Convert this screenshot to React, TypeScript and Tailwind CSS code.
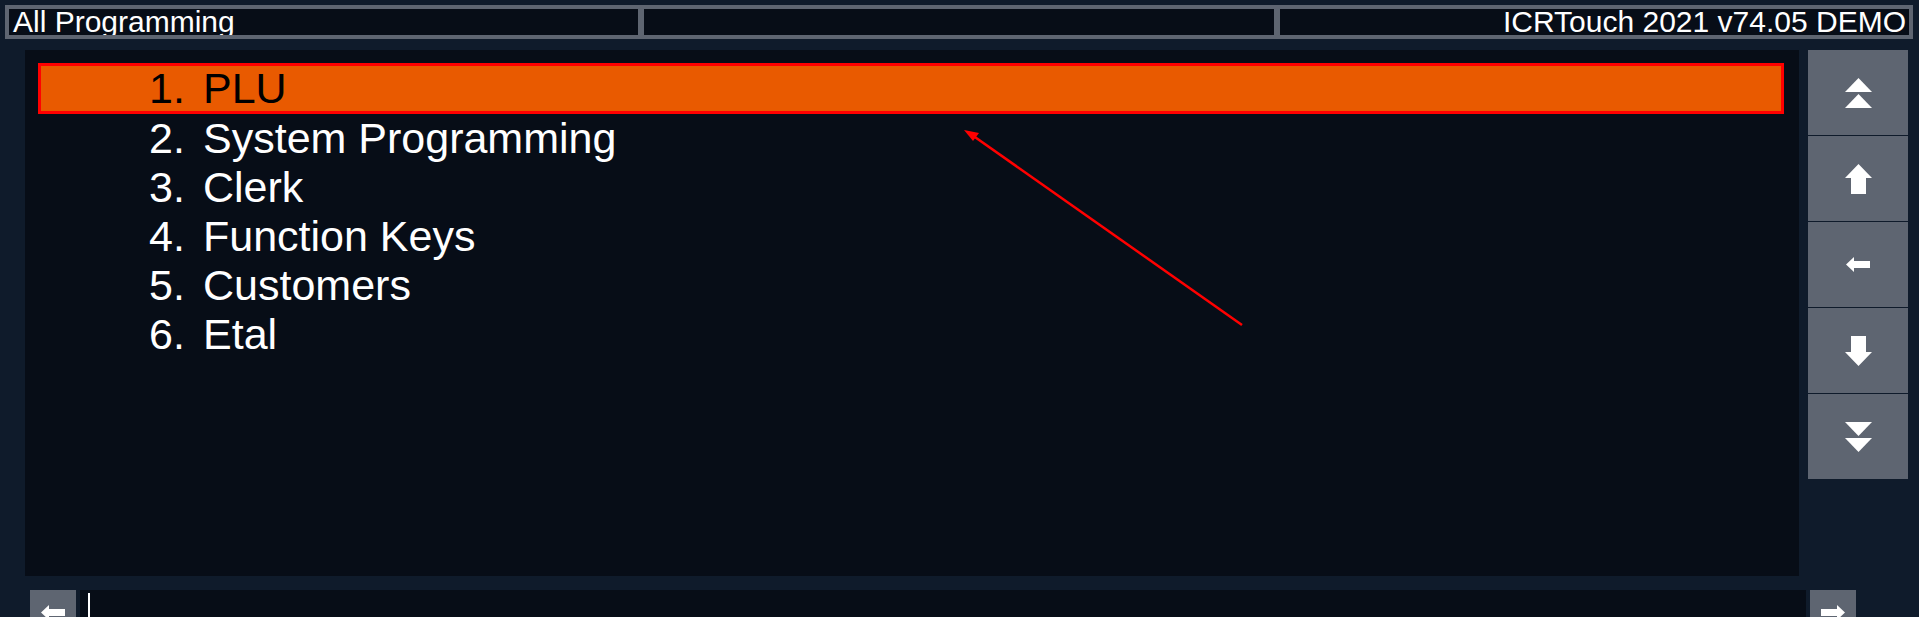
const items = [
  "System Programming",
  "Clerk",
  "Function Keys",
  "Customers",
  "Etal",
]

function DoubleUp() {
  return (
    <svg width="27" height="30" viewBox="0 0 27 30">
      <polygon points="13.5,0 27,14 0,14" fill="white" />
      <polygon points="13.5,16 27,30 0,30" fill="white" />
    </svg>
  )
}

function ArrowUp() {
  return (
    <svg width="27" height="30" viewBox="0 0 27 30">
      <polygon points="13.5,0 27,14 21,14 21,30 6,30 6,14 0,14" fill="white" />
    </svg>
  )
}

function ArrowLeft() {
  return (
    <svg width="24" height="15" viewBox="0 0 24 15">
      <polygon points="0,7.5 8,0 8,4 24,4 24,11 8,11 8,15" fill="white" />
    </svg>
  )
}

function ArrowRight() {
  return (
    <svg width="24" height="15" viewBox="0 0 24 15">
      <polygon points="24,7.5 16,0 16,4 0,4 0,11 16,11 16,15" fill="white" />
    </svg>
  )
}

export default function App() {
  return (
    <div
      className="relative w-[1919px] h-[617px] overflow-hidden bg-[#0f1b2b] flex flex-col"
      style={{ fontFamily: '"Liberation Sans", Arial, sans-serif' }}
    >
      {/* Title bar */}
      <div className="mt-[5px] ml-[5px] mr-[6px] h-[34px] border-4 border-[#5e6571] bg-[#5e6571] grid grid-cols-3 gap-[6px]">
        <div className="bg-[#070d17] overflow-hidden text-white text-[30px] leading-[26px] pl-[4px] whitespace-nowrap">
          All Programming
        </div>
        <div className="bg-[#070d17]"></div>
        <div className="bg-[#070d17] overflow-hidden text-white text-[30px] leading-[26px] text-right pr-[3px] whitespace-nowrap">
          ICRTouch 2021 v74.05 DEMO
        </div>
      </div>

      {/* Main area */}
      <div className="flex mt-[11px]">
        <div className="ml-[25px] w-[1774px] h-[526px] bg-[#070d17] pt-[13px] pl-[13px] pr-[15px]">
          <div className="h-[51px] border-[3px] border-[#ff0000] bg-[#e95a00] flex items-center pl-[108px] text-[43px] leading-[45px] text-black">
            <span className="w-[54px]">1.</span>
            <span>PLU</span>
          </div>
          {items.map((label, i) => (
            <div key={label} className="h-[49px] flex items-center pl-[111px] text-[43px] leading-[49px] text-white">
              <span className="w-[54px]">{i + 2}.</span>
              <span>{label}</span>
            </div>
          ))}
        </div>

        {/* Scroll buttons */}
        <div className="ml-[9px] w-[100px] flex flex-col gap-px">
          <button className="h-[85px] bg-[#5e6571] flex items-center justify-center">
            <DoubleUp />
          </button>
          <button className="h-[85px] bg-[#5e6571] flex items-center justify-center">
            <ArrowUp />
          </button>
          <button className="h-[85px] bg-[#5e6571] flex items-center justify-center">
            <ArrowLeft />
          </button>
          <button className="h-[85px] bg-[#5e6571] flex items-center justify-center">
            <div className="rotate-180"><ArrowUp /></div>
          </button>
          <button className="h-[85px] bg-[#5e6571] flex items-center justify-center">
            <div className="rotate-180"><DoubleUp /></div>
          </button>
        </div>
      </div>

      {/* Input bar */}
      <div className="flex mt-[14px] h-[45px] gap-[4px] pl-[30px]">
        <button className="w-[46px] h-[45px] bg-[#5e6571] flex items-center justify-center">
          <ArrowLeft />
        </button>
        <div className="w-[1726px] h-[45px] bg-[#070d17] pl-[8px] pt-[3px]">
          <div className="w-[2px] h-[40px] bg-white"></div>
        </div>
        <button className="w-[46px] h-[45px] bg-[#5e6571] flex items-center justify-center">
          <ArrowRight />
        </button>
      </div>

      {/* Annotation arrow */}
      <svg className="absolute left-0 top-0 pointer-events-none" width="1919" height="617">
        <line x1="1242" y1="325" x2="972" y2="135" stroke="#ff0000" strokeWidth="2.5" />
        <polygon points="964,130 979,133 973,141" fill="#ff0000" />
      </svg>
    </div>
  )
}
